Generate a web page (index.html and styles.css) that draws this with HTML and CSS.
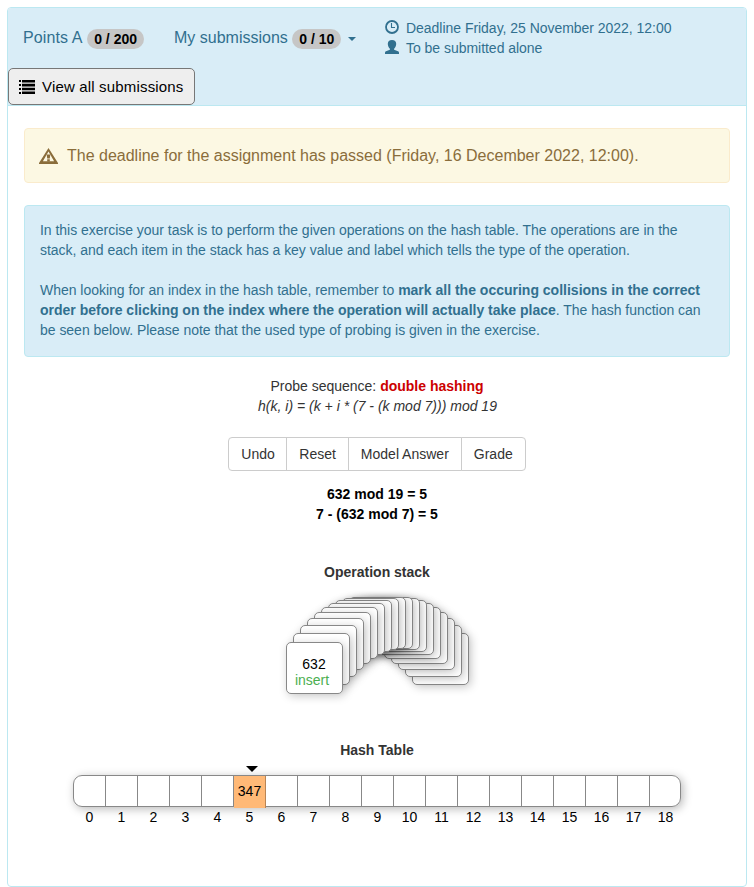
FILE: index.html
```
<!DOCTYPE html>
<html lang="en">
<head>
<meta charset="utf-8">
<title>Exercise: double hashing</title>
<link rel="stylesheet" href="styles.css">
</head>
<body>
<main class="panel">
  <header class="head">
    <div class="info">
      <div class="points">Points A <span class="badge">0 / 200</span></div>
      <div class="subs">My submissions <span class="badge">0 / 10</span><i class="caret"></i></div>
      <div class="meta">
        <div class="meta-row"><svg class="icon" viewBox="0 0 14 14"><circle cx="7" cy="7" r="6" fill="none" stroke="currentColor" stroke-width="1.8"/><path d="M6.500 3v4.500H10" fill="none" stroke="currentColor" stroke-width="1.100"/></svg>Deadline Friday, 25 November 2022, 12:00</div>
        <div class="meta-row"><svg class="icon" viewBox="0 0 14 14"><path d="M7 0C4.300 0 2.800 1.400 2.800 3.800c0 2 .8 3.900 2.100 4.900v1.100L1 11.200c-.7.300-1 .8-1 1.500V14h14v-1.300c0-.7-.3-1.200-1-1.500L9.100 9.800V8.700c1.300-1 2.100-2.900 2.100-4.900C11.200 1.400 9.700 0 7 0z" fill="currentColor"/></svg>To be submitted alone</div>
      </div>
    </div>
    <button class="all"><svg class="list-icon" viewBox="0 0 16 14"><path d="M0 0h2v2H0zM3 0h13v2.500H3zM0 4h2v2H0zM3 3.800h13v2.600H3zM0 8h2v2H0zM3 7.700h13v2.600H3zM0 12h2v2H0zM3 11.500h13V14H3z" fill="currentColor"/></svg>View all submissions</button>
  </header>
  <div class="body">
    <div class="alert warning"><svg class="warn-icon" viewBox="0 0 19 16"><path fill-rule="evenodd" d="M9.500 0L0 15v1h19v-1zM9.500 3.600L3.900 13.300h11.200z" fill="currentColor"/><path d="M7.700 6.500h3.600l-.5 4H8.200zM8.200 11.300h2.600v2.200H8.200z" fill="currentColor"/></svg>The deadline for the assignment has passed (Friday, 16 December 2022, 12:00).</div>
    <div class="alert task">
      <p>In this exercise your task is to perform the given operations on the hash table. The operations are in the stack, and each item in the stack has a key value and label which tells the type of the operation.</p>
      <p>When looking for an index in the hash table, remember to <b>mark all the occuring collisions in the correct order before clicking on the index where the operation will actually take place</b>. The hash function can be seen below. Please note that the used type of probing is given in the exercise.</p>
    </div>
    <div class="probe">Probe sequence: <b class="red">double hashing</b><br><i>h(k, i) = (k + i * (7 - (k mod 7))) mod 19</i></div>
    <div class="buttons"><button>Undo</button><button>Reset</button><button>Model Answer</button><button>Grade</button></div>
    <div class="calc">632 mod 19 = 5<br>7 - (632 mod 7) = 5</div>
    <h2 class="stack-title">Operation stack</h2>
    <div class="stack" id="stack"><div class="card"><span>632</span><span class="insert">insert</span></div></div>
    <h2 class="table-title">Hash Table</h2>
    <div class="pointer"></div>
    <div class="table" id="table"></div>
    <div class="labels" id="labels"></div>
  </div>
</main>
<script src="script.js"></script>
</body>
</html>
```
FILE: styles.css
```
* { box-sizing: border-box; }
body { margin: 7px; background: #fff; font: 14px/20px "Liberation Sans", Arial, sans-serif; color: #333; }
button { font-family: inherit; }
.panel { height: 880px; border: 1px solid #bce8f1; border-radius: 4px; overflow: hidden; }
.head { height: 98px; background: #d9edf7; border-bottom: 1px solid #bce8f1; color: #31708f; }
.info { display: flex; height: 60px; padding-left: 15px; font-size: 16px; white-space: nowrap; }
.points { width: 151px; padding-top: 20px; letter-spacing: .1px; }
.points .badge { margin-left: 1px; letter-spacing: 0; }
.subs { width: 211px; padding-top: 20px; }
.badge { display: inline-block; height: 20px; padding: 0 7px; border-radius: 10px; background: #c6c6c6; color: #000; font-size: 14px; font-weight: bold; line-height: 20px; vertical-align: -1px; }
.caret { display: inline-block; margin-left: 7px; border: 4px solid transparent; border-top-color: currentColor; border-bottom: 0; vertical-align: 2px; }
.meta { padding-top: 10px; font-size: 14px; letter-spacing: -.03px; }
.meta-row { display: flex; height: 20px; }
.icon { width: 14px; height: 14px; margin: 2px 7px 0 0; }
.all { display: flex; align-items: center; width: 187px; height: 37px; padding: 0 10px; border: 1px solid #777; border-radius: 5px; background: #eee; color: #000; font-size: 15px; letter-spacing: .17px; white-space: nowrap; }
.list-icon { width: 16px; height: 14px; margin-right: 7px; flex: none; }
.body { padding: 22px 16px 0; }
.alert { border: 1px solid; border-radius: 4px; }
.warning { display: flex; align-items: center; height: 55px; padding-left: 14px; background: #fcf8e3; border-color: #faebcc; color: #8a6d3b; font-size: 16px; }
.warn-icon { width: 19px; height: 16px; margin-right: 9px; }
.task { height: 152px; margin-top: 22px; padding: 14px 15px; background: #d9edf7; border-color: #bce8f1; color: #31708f; letter-spacing: -.025px; }
.task p { margin: 0 0 20px; }
.task b { letter-spacing: 0; }
.probe, .calc { text-align: center; }
.probe { margin-top: 19px; }
.probe i { padding-left: 1px; }
.red { color: #c00; }
.buttons { display: flex; justify-content: center; margin-top: 21px; }
.buttons button { height: 34px; margin-right: -1px; padding: 0 12px; border: 1px solid #ccc; background: #fff; color: #333; font-size: 14px; }
.buttons button:first-child { width: 59px; border-radius: 4px 0 0 4px; }
.buttons button:last-child { margin-right: 0; border-radius: 0 4px 4px 0; }
.calc { margin-top: 13px; color: #000; font-weight: bold; }
h2 { margin: 0; font-size: 14px; line-height: 20px; text-align: center; }
.stack-title { margin-top: 38px; }
.stack { display: flex; height: 100px; margin: 15px 0 0 262px; }
.card { position: relative; display: flex; flex: none; flex-direction: column; align-items: center; width: 57px; height: 52px; margin-right: -50px; padding: 13px 1px 0 0; border: 1px solid #888; border-radius: 5px; background: #fff; box-shadow: 2px 2px 10px rgba(0, 0, 0, .22); color: #000; line-height: 16px; }
.card .insert { margin-right: 4px; color: #4caf50; }
.table-title { margin-top: 43px; }
.pointer { width: 0; margin: 6px 0 0 222px; border: 6px solid transparent; border-top-color: #000; border-bottom: 0; }
.table { display: flex; width: 608px; height: 32px; margin: 3px 0 0 49px; border: 1px solid #888; border-radius: 9px; box-shadow: 2px 2px 10px rgba(0, 0, 0, .28); color: #000; }
.cell { flex: none; width: 32px; height: 30px; border-right: 1px solid #888; line-height: 30px; text-align: center; }
.cell:last-child { width: 30px; border: 0; }
.cell.filled { position: relative; height: 32px; background: #ffb977; border-color: #b98555; }
.labels { display: flex; margin: 0 0 0 49.5px; color: #000; }
.labels span { width: 32px; text-align: center; }
```
FILE: script.js
```
const tops = [45, 36, 28, 21, 15, 10, 6, 3, 1, 0, 0, 1, 3, 6, 10, 15, 21, 28, 36];
const stack = document.getElementById("stack");
tops.forEach((top, i) => {
  if (i > 0) {
    const next = document.createElement("div");
    next.className = "card";
    stack.append(next);
  }
  const card = stack.children[i];
  card.style.marginTop = top + "px";
  card.style.zIndex = tops.length - i;
});

const table = document.getElementById("table");
const labels = document.getElementById("labels");
for (let i = 0; i < 19; i++) {
  const cell = document.createElement("div");
  cell.className = "cell";
  if (i === 5) {
    cell.classList.add("filled");
    cell.textContent = "347";
  }
  table.append(cell);
  const label = document.createElement("span");
  label.textContent = i;
  labels.append(label);
}
```
